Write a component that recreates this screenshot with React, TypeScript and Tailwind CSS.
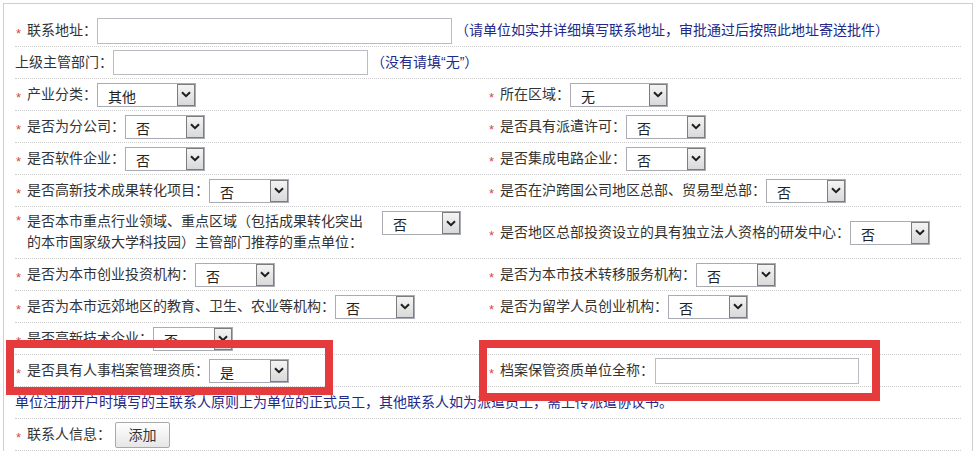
import React from "react";

const Star = () => (
  <span className="inline-flex w-[12px] shrink-0 justify-start pl-[1px] text-[13px] leading-none text-[#d24b4b] translate-y-[3px]">*</span>
);

function Select({ value, width = 80 }: { value: string; width?: number }) {
  return (
    <div
      className="flex h-[24px] shrink-0 border border-[#a9adb3] bg-white"
      style={{ width }}
    >
      <span className="flex-1 pl-[10px] pt-[3px] text-[14px] leading-[20px] text-[#222]">{value}</span>
      <span className="flex h-full w-[18px] items-center justify-center border border-[#7d7d7d] bg-gradient-to-b from-[#f4f4f4] to-[#d9d9d9]">
        <svg width="10" height="7" viewBox="0 0 10 7">
          <path d="M1 1.2 L5 5.2 L9 1.2" fill="none" stroke="#1d1d1d" strokeWidth="2" />
        </svg>
      </span>
    </div>
  );
}

function Field({ label, req = true, children }: { label: string; req?: boolean; children?: React.ReactNode }) {
  return (
    <div className="flex h-full items-center">
      {req && <Star />}
      <span className="whitespace-nowrap">{label}</span>
      {children}
    </div>
  );
}

const rowCls = "h-[32px] border-b border-dotted border-[#cccccc]";

export default function App() {
  return (
    <div className="relative h-[456px] w-[976px] overflow-hidden bg-white font-['Liberation_Sans','Noto_Sans_CJK_SC',sans-serif] text-[14px] leading-[21px] text-[#333]">
      <div className="ml-[3px] mt-[3px] w-[970px] border-x border-t border-[#cfcfcf] px-[11px] pt-[11px]">
        <div className={rowCls}>
          <Field label="联系地址：">
            <div className="h-[26px] w-[355px] border border-[#b9bcc1] bg-white" />
            <span className="ml-[3px] whitespace-nowrap text-[#23288a]">（请单位如实并详细填写联系地址，审批通过后按照此地址寄送批件）</span>
          </Field>
        </div>

        <div className={rowCls}>
          <Field label="上级主管部门：" req={false}>
            <div className="h-[25px] w-[255px] border border-[#b9bcc1] bg-white" />
            <span className="ml-[3px] whitespace-nowrap text-[#23288a]">（没有请填“无”）</span>
          </Field>
        </div>

        <div className={`grid grid-cols-2 ${rowCls}`}>
          <Field label="产业分类："><Select value="其他" width={99} /></Field>
          <Field label="所在区域："><Select value="无" width={98} /></Field>
        </div>

        <div className={`grid grid-cols-2 ${rowCls}`}>
          <Field label="是否为分公司："><Select value="否" /></Field>
          <Field label="是否具有派遣许可："><Select value="否" /></Field>
        </div>

        <div className={`grid grid-cols-2 ${rowCls}`}>
          <Field label="是否软件企业："><Select value="否" /></Field>
          <Field label="是否集成电路企业："><Select value="否" /></Field>
        </div>

        <div className={`grid grid-cols-2 ${rowCls}`}>
          <Field label="是否高新技术成果转化项目："><Select value="否" /></Field>
          <Field label="是否在沪跨国公司地区总部、贸易型总部："><Select value="否" /></Field>
        </div>

        <div className="grid h-[52px] grid-cols-2 border-b border-dotted border-[#cccccc]">
          <div className="flex items-start pt-[4px]">
            <Star />
            <span className="w-[343px]">是否本市重点行业领域、重点区域（包括成果转化突出的本市国家级大学科技园）主管部门推荐的重点单位：</span>
            <div className="ml-[12px]"><Select value="否" width={79} /></div>
          </div>
          <Field label="是否地区总部投资设立的具有独立法人资格的研发中心："><Select value="否" /></Field>
        </div>

        <div className={`grid grid-cols-2 ${rowCls}`}>
          <Field label="是否为本市创业投资机构："><Select value="否" /></Field>
          <Field label="是否为本市技术转移服务机构："><Select value="否" /></Field>
        </div>

        <div className={`grid grid-cols-2 ${rowCls}`}>
          <Field label="是否为本市远郊地区的教育、卫生、农业等机构："><Select value="否" /></Field>
          <Field label="是否为留学人员创业机构："><Select value="否" /></Field>
        </div>

        <div className={`grid grid-cols-2 ${rowCls}`}>
          <Field label="是否高新技术企业："><Select value="否" /></Field>
          <div />
        </div>

        <div className={`grid grid-cols-2 ${rowCls}`}>
          <Field label="是否具有人事档案管理资质："><Select value="是" /></Field>
          <Field label="档案保管资质单位全称：">
            <div className="ml-[1px] h-[26px] w-[204px] border border-[#b9bcc1] bg-white" />
          </Field>
        </div>

        <div className={`flex items-center ${rowCls}`}>
          <span className="whitespace-nowrap text-[#23288a]">单位注册开户时填写的主联系人原则上为单位的正式员工，其他联系人如为派遣员工，需上传派遣协议书。</span>
        </div>

        <div className={rowCls}>
          <Field label="联系人信息：">
            <button className="ml-[4px] h-[26px] w-[55px] rounded-[2px] border border-[#a9a9a9] bg-gradient-to-b from-white to-[#e6e6e6] text-[14px] leading-[24px] text-[#333]">
              添加
            </button>
          </Field>
        </div>
      </div>

      {/* red annotation frames */}
      <div className="pointer-events-none absolute left-[6px] top-[340px] h-[55px] w-[327px] border-[8px] border-[#e53b3d]" />
      <div className="pointer-events-none absolute left-[479px] top-[340px] h-[61px] w-[401px] border-[8px] border-[#e53b3d]" />
    </div>
  );
}
